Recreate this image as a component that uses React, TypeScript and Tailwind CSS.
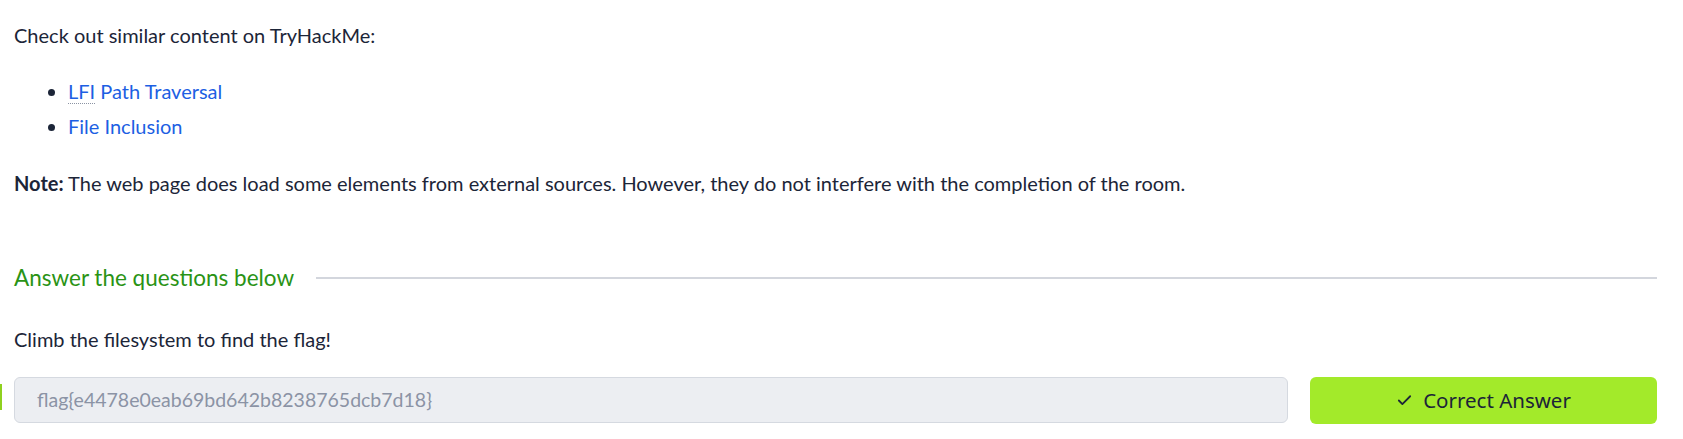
import React from 'react';
import { Check } from 'lucide-react';

const links = [
  { id: 'lfi', abbr: 'LFI', rest: ' Path Traversal' },
  { id: 'fi', abbr: '', rest: 'File Inclusion' },
];

export default function App() {
  return (
    <div className="relative w-full min-h-[439px] bg-white overflow-hidden" style={{ fontFamily: 'Lato, "Noto Sans", sans-serif' }}>
      {/* left edge sliver from the neighbouring panel */}
      <div className="absolute left-0 top-[384px] w-[2px] h-[26px] bg-[#8fd11f]" />

      <div className="pl-[14px] pr-[26px] pt-[20px] text-[#1c2538] text-[20px]">
        <p className="leading-[30px]">Check out similar content on TryHackMe:</p>

        <ul className="mt-[24px] pl-[54px] list-disc">
          {links.map((l) => (
            <li key={l.id} className="leading-[35px] marker:text-[#1c2538]">
              <a className="text-[#1d5fe3]" href="#">
                {l.abbr && (
                  <abbr className="no-underline border-b border-dotted border-[#8b93a3]">{l.abbr}</abbr>
                )}
                {l.rest}
              </a>
            </li>
          ))}
        </ul>

        <p className="mt-[24px] leading-[30px]">
          <strong className="font-bold">Note:</strong> The web page does load some elements from external sources. However, they do not interfere with the completion of the room.
        </p>

        {/* Answer section */}
        <div className="mt-[64px] flex items-center gap-[22px]">
          <h3 className="text-[22.5px] leading-[32px] text-[#2a9315] whitespace-nowrap">Answer the questions below</h3>
          <div className="flex-1 h-[2px] bg-[#d3d6dd]" />
        </div>

        <p className="mt-[30px] leading-[30px]">Climb the filesystem to find the flag!</p>

        <div className="mt-[23px] flex gap-[22px]">
          <div className="flex-1 h-[46px] flex items-center px-[22px] rounded-[6px] border border-[#d5d9e0] bg-[#eceef2] text-[#8b93a5] text-[19.5px]">
            flag{'{'}e4478e0eab69bd642b8238765dcb7d18{'}'}
          </div>
          <button className="w-[347px] h-[47px] rounded-[6px] bg-[#a3ea2a] flex items-center justify-center gap-[10px] text-[#1c2538] text-[20.5px]" style={{ fontFamily: '"Noto Sans", sans-serif' }}>
            <Check size={17} strokeWidth={2.5} />
            Correct Answer
          </button>
        </div>
      </div>
    </div>
  );
}
